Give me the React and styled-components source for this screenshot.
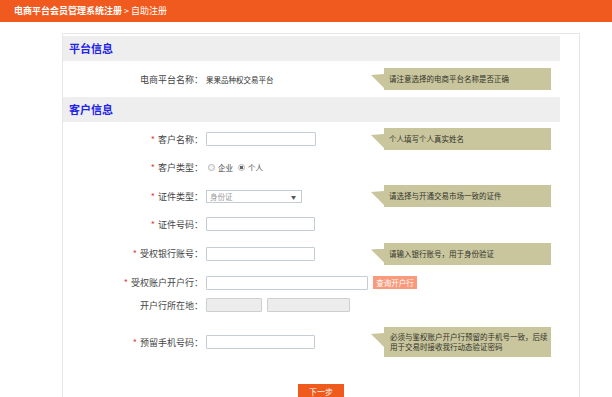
import styled, { createGlobalStyle } from 'styled-components';

const GlobalStyle = createGlobalStyle`
  body {
    margin: 0;
    background: #ffffff;
    font-family: "Noto Sans CJK SC", "Noto Sans", sans-serif;
    color: #333333;
    overflow: hidden;
  }
`;

export default function App() {
  return (
    <>
      <GlobalStyle />
      <Header>
        <strong>电商平台会员管理系统注册</strong> &gt; 自助注册
      </Header>
      <Panel>
        <SectionTitle>平台信息</SectionTitle>
        <Row $h={36}>
          <Label>电商平台名称：</Label>
          <Value>果果品种权交易平台</Value>
          <Tip>请注意选择的电商平台名称是否正确</Tip>
        </Row>

        <SectionTitle>客户信息</SectionTitle>
        <Rows>
          <Row $h={28}>
            <Label>
              <Star>*</Star>客户名称：
            </Label>
            <Input $w={110} />
            <Tip>个人填写个人真实姓名</Tip>
          </Row>
          <Row $h={29}>
            <Label>
              <Star>*</Star>客户类型：
            </Label>
            <Radios>
              <RadioItem>
                <Radio />
                企业
              </RadioItem>
              <RadioItem>
                <Radio $on />
                个人
              </RadioItem>
            </Radios>
          </Row>
          <Row $h={28}>
            <Label>
              <Star>*</Star>证件类型：
            </Label>
            <Select>
              <span>身份证</span>
              <Arrow>▼</Arrow>
            </Select>
            <Tip>请选择与开通交易市场一致的证件</Tip>
          </Row>
          <Row $h={28}>
            <Label>
              <Star>*</Star>证件号码：
            </Label>
            <Input $w={109} />
          </Row>
          <Row $h={31}>
            <Label>
              <Star>*</Star>受权银行账号：
            </Label>
            <Input $w={109} />
            <Tip>请输入银行账号，用于身份验证</Tip>
          </Row>
          <Row $h={27}>
            <Label>
              <Star>*</Star>受权账户开户行：
            </Label>
            <Wide>
              <Input $w={162} />
              <QueryButton>查询开户行</QueryButton>
            </Wide>
          </Row>
          <Row $h={18}>
            <Label>开户行所在地：</Label>
            <Wide>
              <Input $w={56} $gray />
              <Input $w={83} $gray />
            </Wide>
          </Row>
          <Row $h={56}>
            <Label>
              <Star>*</Star>预留手机号码：
            </Label>
            <Input $w={109} />
            <Tip $tall>
              必须与鉴权账户开户行预留的手机号一致，后续
              <br />
              用于交易时接收我行动态验证密码
            </Tip>
          </Row>
        </Rows>
        <Actions>
          <NextButton>下一步</NextButton>
        </Actions>
      </Panel>
    </>
  );
}

const Header = styled.div`
  height: 22px;
  line-height: 22px;
  background: #f05a1e;
  color: #ffffff;
  font-size: 9px;
  padding-left: 14px;

  strong {
    font-weight: bold;
  }
`;

const Panel = styled.div`
  margin: 11px 0 0 62px;
  width: 497px;
  padding: 2px 19px 0 0;
  border: 1px solid #e6e6e6;
  border-bottom: none;
  height: 361px;
`;

const SectionTitle = styled.div`
  height: 25px;
  line-height: 25px;
  background: #eeeeee;
  color: #2323e6;
  font-size: 11px;
  font-weight: bold;
  padding-left: 6px;
`;

const Rows = styled.div`
  padding-top: 3px;
`;

const Row = styled.div`
  display: grid;
  grid-template-columns: 140px 162px 1fr;
  column-gap: 3px;
  align-items: center;
  height: ${(p) => p.$h}px;
`;

const Label = styled.div`
  text-align: right;
  font-size: 9px;
  color: #444444;
  white-space: nowrap;
`;

const Star = styled.span`
  color: #e23b3b;
  margin-right: 3px;
`;

const Value = styled.div`
  font-size: 7.5px;
  color: #333333;
`;

const Input = styled.div`
  box-sizing: border-box;
  width: ${(p) => p.$w}px;
  height: 14px;
  border: 1px solid ${(p) => (p.$gray ? '#cfcfcf' : '#c6ccd6')};
  background: ${(p) => (p.$gray ? '#ececec' : '#ffffff')};
  border-radius: 1px;
`;

const Wide = styled.div`
  grid-column: 2 / 4;
  display: flex;
  align-items: center;
  gap: 5px;
`;

const QueryButton = styled.div`
  width: 44px;
  height: 13px;
  line-height: 13px;
  background: #f99a7c;
  color: #ffffff;
  font-size: 7.5px;
  text-align: center;
`;

const Radios = styled.div`
  display: flex;
  align-items: center;
  gap: 5px;
  font-size: 7.5px;
  color: #444444;
  padding-left: 2px;
`;

const RadioItem = styled.label`
  display: flex;
  align-items: center;
  gap: 3px;
`;

const Radio = styled.span`
  box-sizing: border-box;
  width: 7px;
  height: 7px;
  border-radius: 50%;
  border: 1px solid #b5b5b5;
  background: ${(p) =>
    p.$on ? 'radial-gradient(circle, #666 0 1.6px, #f4f4f4 2px)' : '#f4f4f4'};
`;

const Select = styled.div`
  box-sizing: border-box;
  width: 96px;
  height: 13px;
  border: 1px solid #c6ccd6;
  display: flex;
  align-items: center;
  justify-content: space-between;
  padding: 0 5px 0 3px;
  font-size: 7.5px;
  color: #999999;
`;

const Arrow = styled.span`
  font-size: 5px;
  color: #555555;
`;

const Tip = styled.div`
  position: relative;
  margin-left: 13px;
  width: 167px;
  box-sizing: border-box;
  height: ${(p) => (p.$tall ? 30 : 22)}px;
  background: #c9c69e;
  color: #33332a;
  font-size: 7.5px;
  line-height: ${(p) => (p.$tall ? '10px' : '16px')};
  padding: ${(p) => (p.$tall ? '5px 6px' : '3px 5px')};
  white-space: nowrap;

  &::before {
    content: '';
    position: absolute;
    left: -13px;
    top: 6px;
    width: 13px;
    height: 14px;
    background: #c9c69e;
    clip-path: polygon(0 1px, 100% 0, 100% 100%);
  }
`;

const Actions = styled.div`
  display: flex;
  justify-content: center;
  padding-left: 19px;
  margin-top: 14px;
`;

const NextButton = styled.div`
  width: 46px;
  height: 16px;
  line-height: 16px;
  background: #ef5a1d;
  color: #ffffff;
  font-size: 8px;
  text-align: center;
`;
